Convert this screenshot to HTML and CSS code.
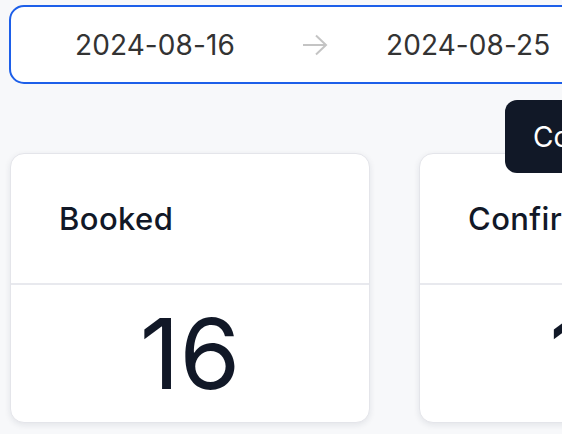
FILE: index.html
```html
<!DOCTYPE html>
<html>
<head>
<meta charset="utf-8">
<link rel="stylesheet" href="styles.css">
</head>
<body>
<div class="page">
  <div class="range-picker">
    <span class="range-input">2024-08-16</span>
    <span class="range-sep">
      <svg width="26" height="22" viewBox="0 0 26 22" fill="none" stroke="#c4c4c4" stroke-width="2" stroke-linecap="butt">
        <path d="M1 11 H24"/>
        <path d="M14 1.5 L24 11 L14 20.5"/>
      </svg>
    </span>
    <span class="range-input">2024-08-25</span>
  </div>
  <div class="cards">
    <div class="card">
      <div class="card-head">Booked</div>
      <div class="card-body">16</div>
    </div>
    <div class="card">
      <div class="card-head">Confirmed</div>
      <div class="card-body">12</div>
    </div>
  </div>
  <div class="tooltip">Compare</div>
</div>
</body>
</html>
```

FILE: styles.css
```css
* { box-sizing: border-box; }
html, body {
  margin: 0;
  padding: 0;
  background: #f7f8fa;
  overflow: hidden;
}
body {
  font-family: "Inter", "Noto Sans", sans-serif;
  width: 562px;
  height: 434px;
}
.page {
  position: relative;
  padding: 5px 0 0 9px;
  width: 1000px;
}
.range-picker {
  display: flex;
  align-items: center;
  width: 700px;
  height: 79px;
  border: 2px solid #1d5fe9;
  border-radius: 15px;
  background: #fff;
  padding-left: 64px;
}
.range-input {
  font-size: 28px;
  color: #333333;
  letter-spacing: 0.1px;
}
.range-sep {
  display: flex;
  margin: 0 58px 0 67px;
}
.cards {
  display: grid;
  grid-template-columns: 360px 360px;
  column-gap: 49px;
  margin-top: 69px;
  margin-left: 1px;
}
.card {
  background: #fff;
  border: 1px solid #e4e5ea;
  border-radius: 14px;
  box-shadow: 0 2px 6px rgba(20, 30, 60, 0.09);
  height: 270px;
  display: flex;
  flex-direction: column;
}
.card-head {
  height: 131px;
  display: flex;
  align-items: center;
  padding-left: 48px;
  font-size: 31px;
  font-weight: 450;
  color: #111827;
  letter-spacing: 0.4px;
  border-bottom: 2px solid #e8e9ee;
}
.card-body {
  flex: 1;
  display: flex;
  align-items: center;
  justify-content: center;
  font-size: 98px;
  color: #111827;
  line-height: 1;
}
.tooltip {
  position: absolute;
  left: 505px;
  top: 100px;
  height: 73px;
  padding: 0 28px;
  display: flex;
  align-items: center;
  background: #111827;
  color: #fff;
  border-radius: 12px;
  font-size: 28px;
}
```
